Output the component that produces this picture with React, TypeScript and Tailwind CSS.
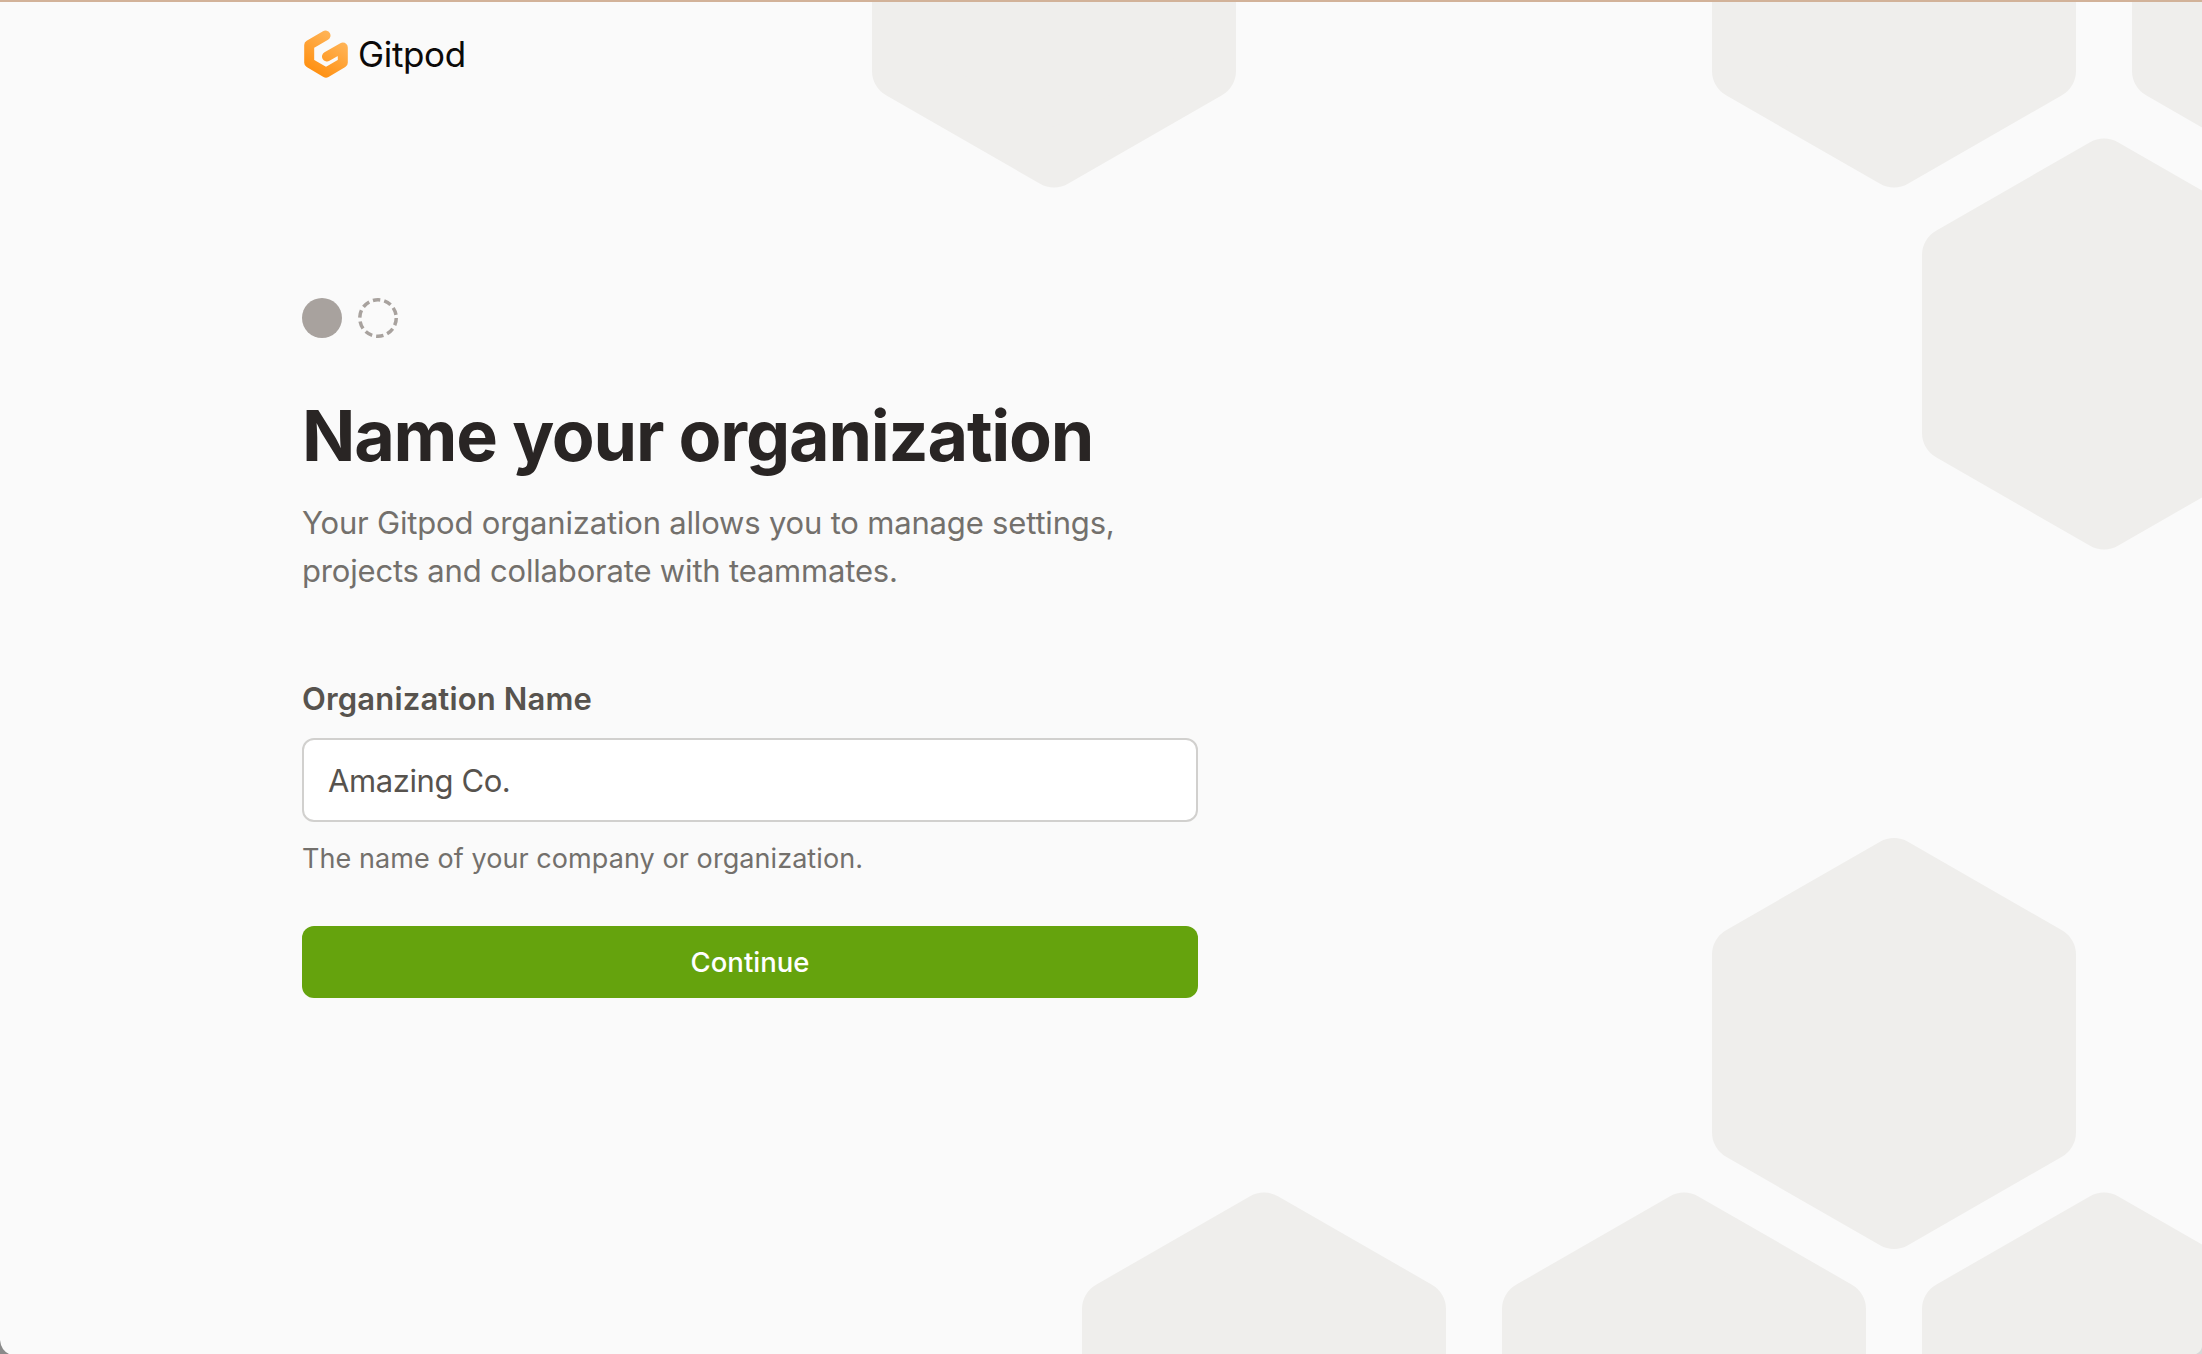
const hexagons = [
  { x: 1054, y: -18 },
  { x: 1894, y: -18 },
  { x: 2314, y: -18 },
  { x: 2104, y: 344 },
  { x: 1894, y: 1043.5 },
  { x: 1264, y: 1398 },
  { x: 1684, y: 1398 },
  { x: 2104, y: 1398 },
];

// pointy-top hexagon, the thick round stroke gives the soft corners
const hexPoints = "0,-177.5 154,-89 154,89 0,177.5 -154,89 -154,-89";

function HexBackground() {
  return (
    <svg className="absolute inset-0" width="2202" height="1354" viewBox="0 0 2202 1354" aria-hidden="true">
      {hexagons.map((hex) => (
        <polygon
          key={`${hex.x}-${hex.y}`}
          points={hexPoints}
          transform={`translate(${hex.x} ${hex.y})`}
          fill="#efeeec"
          stroke="#efeeec"
          strokeWidth="56"
          strokeLinejoin="round"
        />
      ))}
      {/* rounded window corners of the original capture */}
      <path d="M0 1340Q1 1350 9 1354L0 1354Z" fill="#8a8a8a" />
      <path d="M2202 1347Q2201 1352 2196 1354L2202 1354Z" fill="#d8d8d8" />
    </svg>
  );
}

function GitpodLogo() {
  return (
    <svg className="ml-[2px]" width="44" height="48" viewBox="0 0 44 48" fill="none" aria-hidden="true">
      <defs>
        <linearGradient id="gitpod-logo" x1="36" y1="4" x2="10" y2="44" gradientUnits="userSpaceOnUse">
          <stop stopColor="#ffb85f" />
          <stop offset="1" stopColor="#ff8f0f" />
        </linearGradient>
      </defs>
      <path
        d="M21.5 5.5 5.2 15V32.8L22 42.6 38.8 32.8V17.5L23 26.5"
        stroke="url(#gitpod-logo)"
        strokeWidth="10"
        strokeLinecap="round"
        strokeLinejoin="round"
      />
    </svg>
  );
}

function StepDots() {
  return (
    <div className="flex items-center gap-4">
      <div className="h-10 w-10 rounded-full bg-[#a8a29e]" />
      <svg width="40" height="40" viewBox="0 0 40 40" fill="none" aria-hidden="true">
        <circle cx="20" cy="20" r="18.25" stroke="#a8a29e" strokeWidth="3.5" strokeDasharray="7.5 3.97" />
      </svg>
    </div>
  );
}

export default function App() {
  return (
    <div className="relative h-[1354px] w-[2202px] overflow-hidden bg-[#fafafa] font-['Inter',sans-serif]">
      <HexBackground />
      <div className="absolute inset-x-0 top-0 h-[2px] bg-[#d2b299]" />

      <div className="relative pl-[302px]">
        <header className="flex items-center gap-[10px] pt-[29px]">
          <GitpodLogo />
          <span className="text-[35px] leading-[50px] tracking-[-0.35px] text-[#0c0a09]">Gitpod</span>
        </header>

        <main className="w-[896px] pt-[219px]">
          <StepDots />
          <h1 className="mt-[56px] text-[70px] leading-[84px] font-bold tracking-[-1.2px] whitespace-nowrap text-[#292524]">
            Name your organization
          </h1>
          <p className="mt-[21px] text-[31px] leading-[48px] tracking-[-0.18px] text-[#73706c]">
            Your Gitpod organization allows you to manage settings,
            <br />
            projects and collaborate with teammates.
          </p>

          <form className="mt-[82px]">
            <label className="block text-[31px] leading-[44px] font-semibold tracking-[0.16px] text-[#57534e]">
              Organization Name
            </label>
            <div className="mt-[17px] flex h-[84px] items-center rounded-xl border-2 border-[#d1d0ce] bg-white px-6 pt-[3px] text-[31px] tracking-[-0.4px] text-[#57534e]">
              Amazing Co.
            </div>
            <p className="mt-[19px] text-[27px] leading-[36px] tracking-[0.07px] text-[#73706c]">
              The name of your company or organization.
            </p>
            <button
              type="button"
              className="mt-[49px] h-[72px] w-full rounded-xl bg-[#65a30d] pt-[1px] text-[27.5px] font-[550] text-white"
            >
              Continue
            </button>
          </form>
        </main>
      </div>
    </div>
  );
}
